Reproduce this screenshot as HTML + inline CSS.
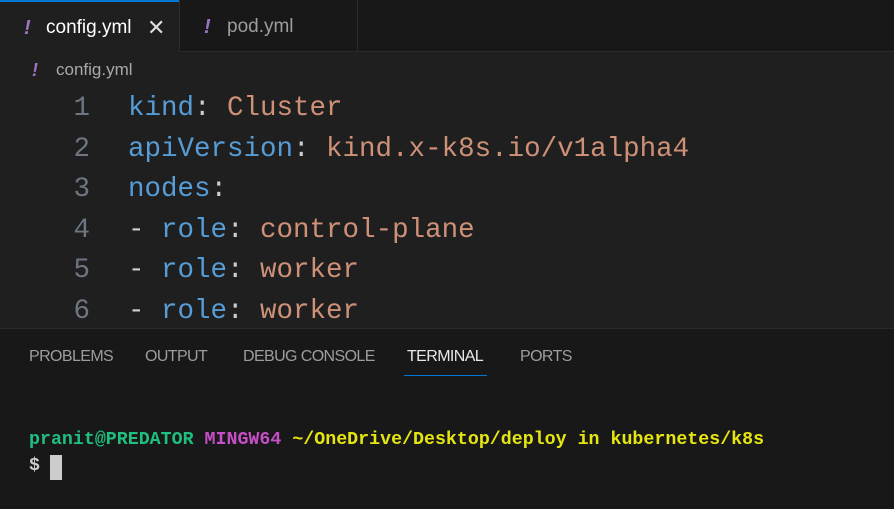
<!DOCTYPE html>
<html><head><style>
html,body{margin:0;padding:0;width:894px;height:508px;overflow:hidden;background:#1f1f1f;font-family:"Liberation Sans",sans-serif}
.tabs{position:absolute;left:0;top:0;width:894px;height:52px;background:#181818;border-bottom:1px solid #2b2b2b;box-sizing:border-box}
.tab{position:absolute;top:0;height:52px;box-sizing:border-box;font-size:19px;line-height:52px}
.t1{left:0;width:179px;background:#1f1f1f;border-top:2px solid #0078d4;color:#fff;line-height:52px}
.t2{left:179px;width:179px;border-right:1px solid #2b2b2b;border-left:1px solid #2b2b2b;color:#9d9d9d;line-height:54px}
.ex{color:#a074c4;font-style:italic;font-weight:bold;position:absolute;font-size:20px}
.crumb{position:absolute;top:58px;left:0;font-size:17px;color:#a9a9a9;line-height:24px}
.code{position:absolute;top:89px;left:0;font-family:"Liberation Mono",monospace;font-size:27.5px;line-height:40.5px;white-space:pre}
.ln{position:absolute;left:72px;width:18px;color:#6e7681;text-align:right}
.k{color:#569cd6}.s{color:#ce9178}.p{color:#ccc}
.panel{position:absolute;left:0;top:328px;width:894px;height:180px;background:#181818;border-top:1px solid #2b2b2b}
.pt{position:absolute;top:19px;font-size:16px;color:#9d9d9d;letter-spacing:-0.6px}
.term{position:absolute;left:29px;font-family:"Liberation Mono",monospace;font-size:18.3px;white-space:pre;font-weight:bold}
</style></head><body>
<div class="tabs">
 <div class="tab t1"><span class="ex" style="left:24px">!</span><span style="position:absolute;left:46px">config.yml</span><span style="position:absolute;left:147px;font-size:22px;color:#ddd">✕</span></div>
 <div class="tab t2"><span class="ex" style="left:24px">!</span><span style="position:absolute;left:47px">pod.yml</span></div>
</div>
<div class="crumb"><span class="ex" style="left:32px;font-size:18px;top:0">!</span><span style="position:absolute;left:56px">config.yml</span></div>
<div class="code">
<div class="ln" style="top:0">1</div><div style="position:absolute;left:128px;top:0"><span class="k">kind</span><span class="p">: </span><span class="s">Cluster</span></div>
<div class="ln" style="top:40.5px">2</div><div style="position:absolute;left:128px;top:40.5px"><span class="k">apiVersion</span><span class="p">: </span><span class="s">kind.x-k8s.io/v1alpha4</span></div>
<div class="ln" style="top:81px">3</div><div style="position:absolute;left:128px;top:81px"><span class="k">nodes</span><span class="p">:</span></div>
<div class="ln" style="top:121.5px">4</div><div style="position:absolute;left:128px;top:121.5px"><span class="p">- </span><span class="k">role</span><span class="p">: </span><span class="s">control-plane</span></div>
<div class="ln" style="top:162px">5</div><div style="position:absolute;left:128px;top:162px"><span class="p">- </span><span class="k">role</span><span class="p">: </span><span class="s">worker</span></div>
<div class="ln" style="top:202.5px">6</div><div style="position:absolute;left:128px;top:202.5px"><span class="p">- </span><span class="k">role</span><span class="p">: </span><span class="s">worker</span></div>
</div>
<div class="panel">
 <div class="pt" style="left:29px">PROBLEMS</div>
 <div class="pt" style="left:145px">OUTPUT</div>
 <div class="pt" style="left:243px">DEBUG CONSOLE</div>
 <div class="pt" style="left:407px;color:#e7e7e7">TERMINAL</div>
 <div style="position:absolute;left:404px;top:46px;width:83px;height:1px;background:#0078d4"></div>
 <div class="pt" style="left:520px">PORTS</div>
 <div class="term" style="top:101px"><span style="color:#1fbf7f">pranit@PREDATOR</span> <span style="color:#c64fc8">MINGW64</span> <span style="color:#e5e510">~/OneDrive/Desktop/deploy</span> <span style="color:#e5e510">in kubernetes/k8s</span></div>
 <div class="term" style="top:127px;color:#ccc">$ </div>
 <div style="position:absolute;left:50px;top:126px;width:12px;height:25px;background:#ccc"></div>
</div>
</body></html>
